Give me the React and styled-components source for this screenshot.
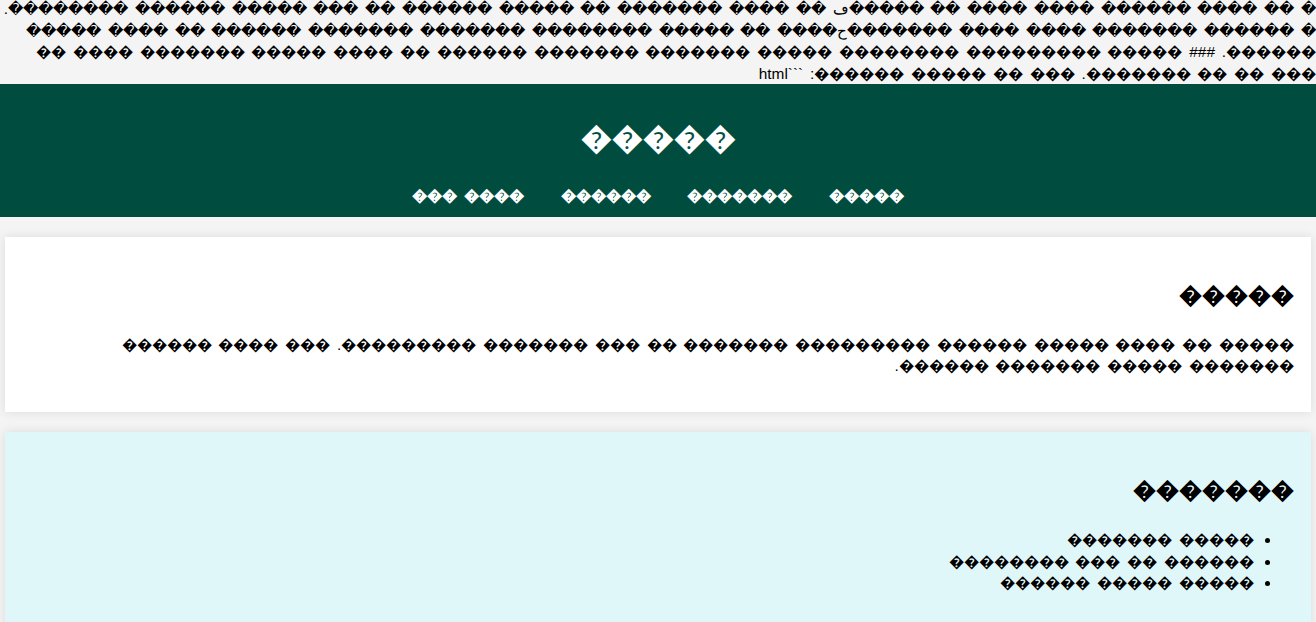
import React from "react";
import styled, { createGlobalStyle } from "styled-components";

// the source page came through with a broken encoding, so every letter shows as U+FFFD.
// digits in these strings stand for a run of that many replacement characters.
const g = (s) => s.replace(/\d+/g, (n) => "\uFFFD".repeat(Number(n)));

const noteLines = [
  "2 2 4 6 4 4 2 5ڡ 2 4 7 2 5 6 2 3 5 6 8.",
  "2 6 7 4 4 7ح4 2 5 8 7 7 6 2 4 5",
  "7. ### 5 9 8 5 7 7 6 2 4 5 7 4 2",
  "4 2 2 7. 3 2 5 6: ```html",
];

const links = ["5", "7", "6", "4 3"];

const intro = "5 2 4 5 6 9 7 2 3 7 9. 3 4 6 7 5 7 6.";

const features = ["5 7", "6 2 3 8", "5 5 6"];

const GlobalStyle = createGlobalStyle`
  html, body {
    margin: 0;
    padding: 0;
    overflow-x: hidden;
  }
  body {
    background: #f4f4f4;
    color: #000;
    font-family: "Liberation Sans", Arial, sans-serif;
    font-size: 15.4px;
    line-height: 1.4;
    word-spacing: 2.5px;
  }
`;

const Note = styled.p`
  width: 1331px;
  margin: -2px 0 0;
  direction: rtl;
  text-align: right;
  white-space: nowrap;
  line-height: 21.5px;
`;

const Header = styled.header`
  background: #004d40;
  color: #fff;
  text-align: center;
  padding: 12px 0 10px;
  direction: rtl;
`;

const Title = styled.h1`
  font-size: 2em;
  line-height: 1.4;
  margin: 21px 0 25px;
`;

const Nav = styled.nav`
  a {
    color: #fff;
    font-weight: bold;
    text-decoration: none;
    margin: 0 15px;
  }
`;

const Section = styled.section`
  background: ${(p) => (p.$tint ? "#e0f7fa" : "#fff")};
  margin: 20px 5px;
  padding: 20px 17px;
  box-shadow: 0 0 10px rgba(0, 0, 0, 0.1);
  direction: rtl;
  h2 {
    font-size: 1.5em;
    line-height: 37px;
    margin: 20px 0;
  }
  p {
    margin: 1em 0;
  }
  ul {
    margin: 1em 0;
    padding-right: 40px;
  }
`;

export default function App() {
  return (
    <>
      <GlobalStyle />
      <Note>
        {noteLines.map((line, i) => (
          <React.Fragment key={i}>
            {g(line)}
            {i < noteLines.length - 1 && <br />}
          </React.Fragment>
        ))}
      </Note>
      <Header>
        <Title>{g("5")}</Title>
        <Nav>
          {links.map((l, i) => (
            <React.Fragment key={l}>
              {i > 0 && " "}
              <a href="#">{g(l)}</a>
            </React.Fragment>
          ))}
        </Nav>
      </Header>
      <Section>
        <h2>{g("5")}</h2>
        <p>{g(intro)}</p>
      </Section>
      <Section $tint>
        <h2>{g("7")}</h2>
        <ul>
          {features.map((f) => (
            <li key={f}>{g(f)}</li>
          ))}
        </ul>
      </Section>
    </>
  );
}
